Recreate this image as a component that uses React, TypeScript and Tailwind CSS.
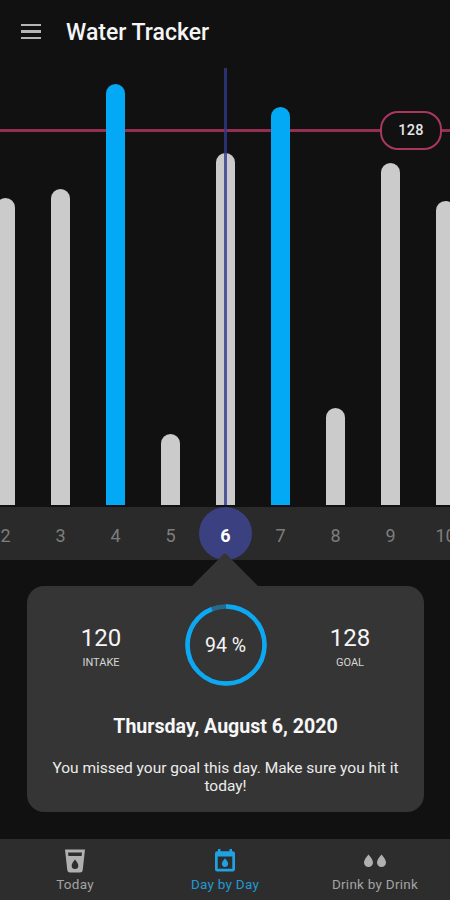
import type { ReactNode } from "react";

type Day = { day: number; height: number; hit?: boolean };

const SELECTED = 6;

const days: Day[] = [
  { day: 2, height: 307 },
  { day: 3, height: 316 },
  { day: 4, height: 421, hit: true },
  { day: 5, height: 71 },
  { day: 6, height: 352 },
  { day: 7, height: 398, hit: true },
  { day: 8, height: 97 },
  { day: 9, height: 342 },
  { day: 10, height: 304 },
];

function Header() {
  return (
    <header className="flex h-16 shrink-0 items-center pl-[21px]">
      <button aria-label="Menu" className="flex w-5 flex-col gap-[4px] pb-px">
        <span className="h-[2.5px] w-full bg-[#b5b5b5]" />
        <span className="h-[2.5px] w-full bg-[#b5b5b5]" />
        <span className="h-[2.5px] w-full bg-[#b5b5b5]" />
      </button>
      <h1 className="ml-[25px] text-[23px] font-medium leading-none text-[#f5f5f5]">Water Tracker</h1>
    </header>
  );
}

function Chart() {
  return (
    <section className="relative flex h-[441px] shrink-0 justify-center overflow-hidden">
      <div className="absolute left-0 top-[65px] h-[3px] w-full bg-[#932f53]" />
      <div className="relative flex w-[495px] shrink-0 items-end">
        {days.map((d) => (
          <div key={d.day} className="flex w-[55px] justify-center">
            <div
              className={`w-[19px] rounded-t-full ${d.hit ? "bg-[#03a9f4]" : "bg-[#cbcbcb]"}`}
              style={{ height: d.height }}
            />
          </div>
        ))}
      </div>
      <div className="absolute bottom-0 left-[224px] top-[4px] w-[3px] bg-[#303a8c]/80" />
      <div className="absolute right-[8px] top-[47px] flex h-[39px] w-[62px] items-center justify-center rounded-[18px] border-2 border-[#a93760] bg-[#111111] pt-px text-[14.5px] font-medium tracking-[0.3px] text-[#e6e6e6]">
        128
      </div>
    </section>
  );
}

function DayStrip() {
  return (
    <section className="mt-[2px] flex h-[53px] shrink-0 justify-center overflow-hidden bg-[#2a2a2a]">
      <div className="flex w-[495px] shrink-0">
        {days.map((d) =>
          d.day === SELECTED ? (
            <div key={d.day} className="flex w-[55px] justify-center">
              <span className="flex size-[53px] items-center justify-center rounded-full bg-[#3b4080] pl-px pt-[4px] text-[18px] font-bold text-white">
                {d.day}
              </span>
            </div>
          ) : (
            <div
              key={d.day}
              className="flex w-[55px] items-center justify-center pl-px pt-[4px] text-[18px] text-[#7d7d7d]"
            >
              {d.day}
            </div>
          )
        )}
      </div>
    </section>
  );
}

function Stat({ value, label }: { value: number; label: string }) {
  return (
    <div className="flex w-[100px] flex-col items-center">
      <span className="text-[24px] leading-[28px] text-[#f5f5f5]">{value}</span>
      <span className="mt-[4px] text-[11px] leading-[14px] text-[#d6d6d6]">{label}</span>
    </div>
  );
}

function ProgressRing({ percent }: { percent: number }) {
  return (
    <div className="relative flex size-[82px] items-center justify-center">
      <svg viewBox="0 0 82 82" className="absolute inset-0 -rotate-90" fill="none">
        <circle cx="41" cy="41" r="38.5" stroke="#256b8d" strokeWidth="4.5" />
        <circle
          cx="41"
          cy="41"
          r="38.5"
          stroke="#0da8f2"
          strokeWidth="4.5"
          pathLength="100"
          strokeDasharray={`${percent} 100`}
        />
      </svg>
      <span className="relative pt-[2px] text-[19.5px] text-[#f5f5f5]">{percent} %</span>
    </div>
  );
}

function SummaryCard() {
  return (
    <section className="relative ml-[27px] mt-[26px] h-[226px] w-[397px] shrink-0 rounded-[17px] bg-[#353535]">
      <svg viewBox="0 0 68 34" className="absolute left-[164px] top-[-33px] h-[34px] w-[68px]" fill="#353535">
        <path d="M0 34 32.5 1.2q1.5-1.4 3 0L68 34Z" />
      </svg>
      <div className="flex justify-between px-6 pt-[18px]">
        <div className="pt-[20px]">
          <Stat value={120} label="INTAKE" />
        </div>
        <ProgressRing percent={94} />
        <div className="pt-[20px]">
          <Stat value={128} label="GOAL" />
        </div>
      </div>
      <h2 className="mt-[29px] text-center text-[19.6px] font-bold leading-6 text-[#f7f7f7]">
        Thursday, August 6, 2020
      </h2>
      <p className="mt-[20px] px-5 text-center text-[15.5px] leading-[18px] text-[#ececec]">
        You missed your goal this day. Make sure you hit it today!
      </p>
    </section>
  );
}

function CupIcon() {
  return (
    <svg viewBox="0 0 24 24" className="size-6" fill="currentColor" fillRule="evenodd">
      <path d="M2 .5h20l-2.3 20.7Q19.400 23.500 17 23.500H7q-2.400 0-2.700-2.300ZM5 3.500l.400 3.500h13.200l.400-3.500ZM12 10.500c-2 2.500-3.300 4.200-3.300 6.200a3.300 3.300 0 0 0 6.600 0c0-2-1.300-3.700-3.300-6.200Z" />
    </svg>
  );
}

function CalendarIcon() {
  return (
    <svg viewBox="0 0 24 24" className="size-6" fill="currentColor" fillRule="evenodd">
      <path d="M5 0h2.500v2.200h9V0H19v2.200h.800Q22 2.200 22 4.500v15.700Q22 22.500 19.800 22.500H4.200Q2 22.500 2 20.200V4.500Q2 2.200 4.200 2.200H5ZM4.700 7.500v12.300h14.600V7.500ZM12 9.300c-1.900 2.400-3.100 3.800-3.100 5.500a3.100 3.100 0 0 0 6.200 0c0-1.700-1.200-3.100-3.100-5.500Z" />
    </svg>
  );
}

function DropsIcon() {
  return (
    <svg viewBox="0 0 24 24" className="size-6" fill="currentColor">
      <path d="M5.500 5.500C2.800 8.800 1 11 1 13.500a4.500 4.500 0 0 0 9 0C10 11 8.200 8.800 5.500 5.500ZM18.500 5.500C15.800 8.800 14 11 14 13.500a4.500 4.500 0 0 0 9 0c0-2.500-1.800-4.700-4.500-8Z" />
    </svg>
  );
}

function Tab({ icon, label, active }: { icon: ReactNode; label: string; active?: boolean }) {
  return (
    <button className={`flex w-[150px] flex-col items-center pt-[10px] ${active ? "text-[#1fa2e4]" : "text-[#b0b0b0]"}`}>
      {icon}
      <span className={`mt-[3px] text-[13.5px] leading-4 tracking-[0.25px] ${active ? "text-[#2299d4]" : "text-[#a3a3a3]"}`}>
        {label}
      </span>
    </button>
  );
}

export default function App() {
  return (
    <div className="flex h-[900px] w-[450px] flex-col overflow-hidden bg-[#111111] font-[Roboto,sans-serif]">
      <Header />
      <Chart />
      <DayStrip />
      <SummaryCard />
      <nav className="mt-auto flex h-[61px] shrink-0 bg-[#2d2d2d]">
        <Tab icon={<CupIcon />} label="Today" />
        <Tab icon={<CalendarIcon />} label="Day by Day" active />
        <Tab icon={<DropsIcon />} label="Drink by Drink" />
      </nav>
    </div>
  );
}
